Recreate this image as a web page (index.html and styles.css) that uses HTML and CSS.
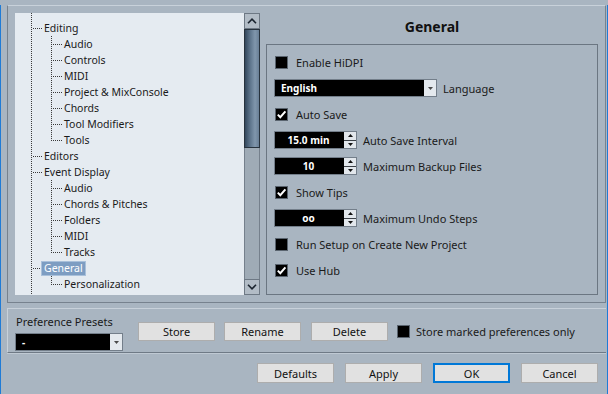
FILE: index.html
```html
<!DOCTYPE html>
<html>
<head>
<meta charset="utf-8">
<link rel="stylesheet" href="styles.css">
</head>
<body>
<div class="win">
  <div class="top">
    <div class="tree">
      <div class="row"><span class="t0"></span><span class="lbl">Editing</span></div>
      <div class="row"><span class="sp"></span><span class="t1"></span><span class="lbl">Audio</span></div>
      <div class="row"><span class="sp"></span><span class="t1"></span><span class="lbl">Controls</span></div>
      <div class="row"><span class="sp"></span><span class="t1"></span><span class="lbl">MIDI</span></div>
      <div class="row"><span class="sp"></span><span class="t1"></span><span class="lbl">Project &amp; MixConsole</span></div>
      <div class="row"><span class="sp"></span><span class="t1"></span><span class="lbl">Chords</span></div>
      <div class="row"><span class="sp"></span><span class="t1"></span><span class="lbl">Tool Modifiers</span></div>
      <div class="row"><span class="sp"></span><span class="l1"></span><span class="lbl">Tools</span></div>
      <div class="row"><span class="t0"></span><span class="lbl">Editors</span></div>
      <div class="row"><span class="t0"></span><span class="lbl">Event Display</span></div>
      <div class="row"><span class="sp"></span><span class="t1"></span><span class="lbl">Audio</span></div>
      <div class="row"><span class="sp"></span><span class="t1"></span><span class="lbl">Chords &amp; Pitches</span></div>
      <div class="row"><span class="sp"></span><span class="t1"></span><span class="lbl">Folders</span></div>
      <div class="row"><span class="sp"></span><span class="t1"></span><span class="lbl">MIDI</span></div>
      <div class="row"><span class="sp"></span><span class="l1"></span><span class="lbl">Tracks</span></div>
      <div class="row"><span class="t0"></span><span class="lbl sel">General</span></div>
      <div class="row"><span class="sp"></span><span class="l1"></span><span class="lbl">Personalization</span></div>
    </div>
    <div class="sb">
      <div class="sbb"><svg width="10" height="6" viewBox="0 0 10 6"><polyline points="1,5.2 5,1.2 9,5.2" fill="none" stroke="#1c2530" stroke-width="1.6"/></svg></div>
      <div class="thumb"></div>
      <div class="track"></div>
      <div class="sbb"><svg width="10" height="6" viewBox="0 0 10 6"><polyline points="1,0.8 5,4.8 9,0.8" fill="none" stroke="#1c2530" stroke-width="1.6"/></svg></div>
    </div>
    <div class="pane">
      <div class="title">General</div>
      <div class="group">
        <div class="opt"><span class="cb"></span><span class="txt">Enable HiDPI</span></div>
        <div class="opt gap6">
          <div class="combo lang"><span class="cval">English</span><span class="drop"><svg width="5" height="3" viewBox="0 0 5 3"><polygon points="0,0 5,0 2.5,3" fill="#4a4a4a"/></svg></span></div>
          <span class="txt">Language</span>
        </div>
        <div class="opt"><span class="cb"><svg width="11" height="11" viewBox="0 0 11 11"><polyline points="1.8,5.6 4.3,8.2 9.4,2.4" fill="none" stroke="#fff" stroke-width="2"/></svg></span><span class="txt">Auto Save</span></div>
        <div class="opt gap6">
          <div class="spin"><span class="sval">15.0 min</span><span class="arrows"><span class="ar"><svg width="5" height="3" viewBox="0 0 5 3"><polygon points="0,3 5,3 2.5,0" fill="#111"/></svg></span><span class="ar"><svg width="5" height="3" viewBox="0 0 5 3"><polygon points="0,0 5,0 2.5,3" fill="#111"/></svg></span></span></div>
          <span class="txt">Auto Save Interval</span>
        </div>
        <div class="opt gap6">
          <div class="spin"><span class="sval">10</span><span class="arrows"><span class="ar"><svg width="5" height="3" viewBox="0 0 5 3"><polygon points="0,3 5,3 2.5,0" fill="#111"/></svg></span><span class="ar"><svg width="5" height="3" viewBox="0 0 5 3"><polygon points="0,0 5,0 2.5,3" fill="#111"/></svg></span></span></div>
          <span class="txt">Maximum Backup Files</span>
        </div>
        <div class="opt"><span class="cb"><svg width="11" height="11" viewBox="0 0 11 11"><polyline points="1.8,5.6 4.3,8.2 9.4,2.4" fill="none" stroke="#fff" stroke-width="2"/></svg></span><span class="txt">Show Tips</span></div>
        <div class="opt gap6">
          <div class="spin"><span class="sval">oo</span><span class="arrows"><span class="ar"><svg width="5" height="3" viewBox="0 0 5 3"><polygon points="0,3 5,3 2.5,0" fill="#111"/></svg></span><span class="ar"><svg width="5" height="3" viewBox="0 0 5 3"><polygon points="0,0 5,0 2.5,3" fill="#111"/></svg></span></span></div>
          <span class="txt">Maximum Undo Steps</span>
        </div>
        <div class="opt"><span class="cb"></span><span class="txt">Run Setup on Create New Project</span></div>
        <div class="opt"><span class="cb"><svg width="11" height="11" viewBox="0 0 11 11"><polyline points="1.8,5.6 4.3,8.2 9.4,2.4" fill="none" stroke="#fff" stroke-width="2"/></svg></span><span class="txt">Use Hub</span></div>
      </div>
    </div>
  </div>

  <div class="presets">
    <div class="pcol">
      <div class="plabel">Preference Presets</div>
      <div class="combo pcombo"><span class="cval">-</span><span class="drop"><svg width="5" height="3" viewBox="0 0 5 3"><polygon points="0,0 5,0 2.5,3" fill="#4a4a4a"/></svg></span></div>
    </div>
    <button class="btn pbtn store">Store</button>
    <button class="btn pbtn rename">Rename</button>
    <button class="btn pbtn delete">Delete</button>
    <span class="cb pcb"></span>
    <span class="txt pcbl">Store marked preferences only</span>
  </div>

  <div class="actions">
    <button class="btn abtn">Defaults</button>
    <button class="btn abtn">Apply</button>
    <button class="btn abtn ok">OK</button>
    <button class="btn abtn">Cancel</button>
  </div>
</div>
</body>
</html>
```

FILE: styles.css
```css
html, body {
  margin: 0;
  padding: 0;
}

body {
  width: 608px;
  height: 394px;
  overflow: hidden;
  background: #a9b5c1;
  font-family: "Noto Sans", "Open Sans", sans-serif;
  font-size: 11px;
  color: #1a1a1a;
}

.win {
  box-sizing: border-box;
  width: 608px;
  height: 394px;
  border: 1px solid #1f7bd6;
  border-top: none;
  background: #a9b5c1;
}

/* ---------- top panel ---------- */
.top {
  box-sizing: border-box;
  display: flex;
  width: 599px;
  height: 298px;
  margin: 5px 0 0 6px;
  padding: 7px;
  border: 1px solid #77828e;
  border-top-color: #c8d1da;
}

.tree {
  box-sizing: border-box;
  width: 229px;
  height: 282px;
  padding-top: 7px;
  overflow: hidden;
  font-size: 10.5px;
  background:
    repeating-linear-gradient(to bottom, #3a3a3a 0 1px, transparent 1px 2px) 16px 0 / 1px 100% no-repeat,
    #e5ebf1;
}

.row {
  display: flex;
  align-items: center;
  height: 16px;
  padding-left: 16px;
  white-space: nowrap;
}

.sp {
  flex: none;
  width: 20px;
  height: 16px;
}

.t0, .t1, .l1 {
  flex: none;
  width: 13px;
  height: 16px;
}

.t0 {
  background: repeating-linear-gradient(to right, #3a3a3a 0 1px, transparent 1px 2px) 2px 8px / 10px 1px no-repeat;
}

.t1 {
  background:
    repeating-linear-gradient(to right, #3a3a3a 0 1px, transparent 1px 2px) 2px 8px / 10px 1px no-repeat,
    repeating-linear-gradient(to bottom, #3a3a3a 0 1px, transparent 1px 2px) 0 0 / 1px 16px no-repeat;
}

.l1 {
  background:
    repeating-linear-gradient(to right, #3a3a3a 0 1px, transparent 1px 2px) 2px 8px / 10px 1px no-repeat,
    repeating-linear-gradient(to bottom, #3a3a3a 0 1px, transparent 1px 2px) 0 0 / 1px 9px no-repeat;
}

.lbl {
  line-height: 16px;
  color: #1a1a1a;
}

.sel {
  line-height: 15px;
  margin-left: -3px;
  padding: 0 3px;
  color: #ffffff;
  background: #7d9dc2;
  box-shadow: inset 0 0 0 1px #a9c0da;
}

/* ---------- scrollbar ---------- */
.sb {
  display: flex;
  flex-direction: column;
  width: 16px;
  height: 282px;
  flex: none;
}

.sbb {
  box-sizing: border-box;
  height: 16px;
  display: flex;
  align-items: center;
  justify-content: center;
  border: 1px solid #6d7884;
  background: #b2bcc6;
}

.thumb {
  box-sizing: border-box;
  height: 119px;
  border: 1px solid #27323d;
  background: linear-gradient(to right, #33475c 0%, #5b7289 35%, #8096ac 72%, #687e95 100%);
}

.track {
  flex: 1;
  box-sizing: border-box;
  border-left: 1px solid #75808c;
  border-right: 1px solid #75808c;
  background: #9fabb6;
}

/* ---------- right pane ---------- */
.pane {
  display: flex;
  flex-direction: column;
  width: 332px;
  margin-left: 6px;
  flex: none;
}

.title {
  height: 31px;
  line-height: 28px;
  text-align: center;
  font-weight: bold;
  font-size: 14px;
  color: #111;
}

.group {
  box-sizing: border-box;
  height: 251px;
  padding: 4px 8px;
  border: 1px solid #6b7682;
}

.opt {
  display: flex;
  align-items: center;
  gap: 8px;
  height: 26px;
}

.opt.gap6 {
  gap: 6px;
}

.txt {
  white-space: nowrap;
  color: #1a1a1a;
}

.cb {
  box-sizing: border-box;
  flex: none;
  width: 13px;
  height: 13px;
  display: flex;
  align-items: center;
  justify-content: center;
  background: #000;
  border: 1px solid #5a646f;
}

.combo {
  box-sizing: border-box;
  display: flex;
  height: 18px;
  background: #000;
  border: 1px solid #737e8a;
}

.lang {
  width: 163px;
  margin-left: -1px;
}

.cval {
  flex: 1;
  padding-left: 6px;
  line-height: 16px;
  font-size: 10px;
  font-weight: bold;
  color: #fff;
}

.drop {
  width: 12px;
  display: flex;
  align-items: center;
  justify-content: center;
  background: #e4e9ee;
}

.spin {
  box-sizing: border-box;
  display: flex;
  width: 83px;
  height: 18px;
  margin-left: -1px;
  background: #000;
  border: 1px solid #737e8a;
}

.sval {
  flex: 1;
  text-align: center;
  line-height: 16px;
  font-size: 10px;
  font-weight: bold;
  color: #fff;
}

.arrows {
  display: flex;
  flex-direction: column;
  gap: 1px;
  width: 12px;
  margin-left: 2px;
  background: #3a3f45;
}

.ar {
  flex: 1;
  display: flex;
  align-items: center;
  justify-content: center;
  background: #e2e7ec;
}

/* ---------- presets ---------- */
.presets {
  box-sizing: border-box;
  display: flex;
  align-items: center;
  width: 599px;
  margin: 5px 0 0 6px;
  padding: 5px 0 1px 8px;
  border-top: 1px solid #c8d1da;
  border-left: 1px solid #c8d1da;
  border-bottom: 1px solid #6f7a86;
  box-shadow: 0 1px 0 #bfc9d3;
}

.pcol {
  display: flex;
  flex-direction: column;
}

.plabel {
  line-height: 16px;
  white-space: nowrap;
}

.pcombo {
  width: 108px;
  margin: 3px 0 0 -1px;
}

.btn {
  box-sizing: border-box;
  width: 77px;
  padding: 0;
  font-family: "Noto Sans", "Open Sans", sans-serif;
  font-size: 11px;
  color: #111;
  background: #e1e1e1;
  border: 1px solid #adadad;
}

.pbtn {
  height: 19px;
  margin-bottom: 2px;
}

.store {
  margin-left: 15px;
}

.rename {
  margin-left: 9px;
}

.delete {
  margin-left: 10px;
}

.pcb {
  margin-left: 9px;
  margin-bottom: 2px;
}

.pcbl {
  margin-left: 6px;
  margin-bottom: 2px;
}

/* ---------- bottom actions ---------- */
.actions {
  display: flex;
  justify-content: flex-end;
  gap: 11px;
  margin-top: 10px;
  padding-right: 9px;
}

.abtn {
  height: 20px;
}

.ok {
  border: 2px solid #0078d7;
}
```
